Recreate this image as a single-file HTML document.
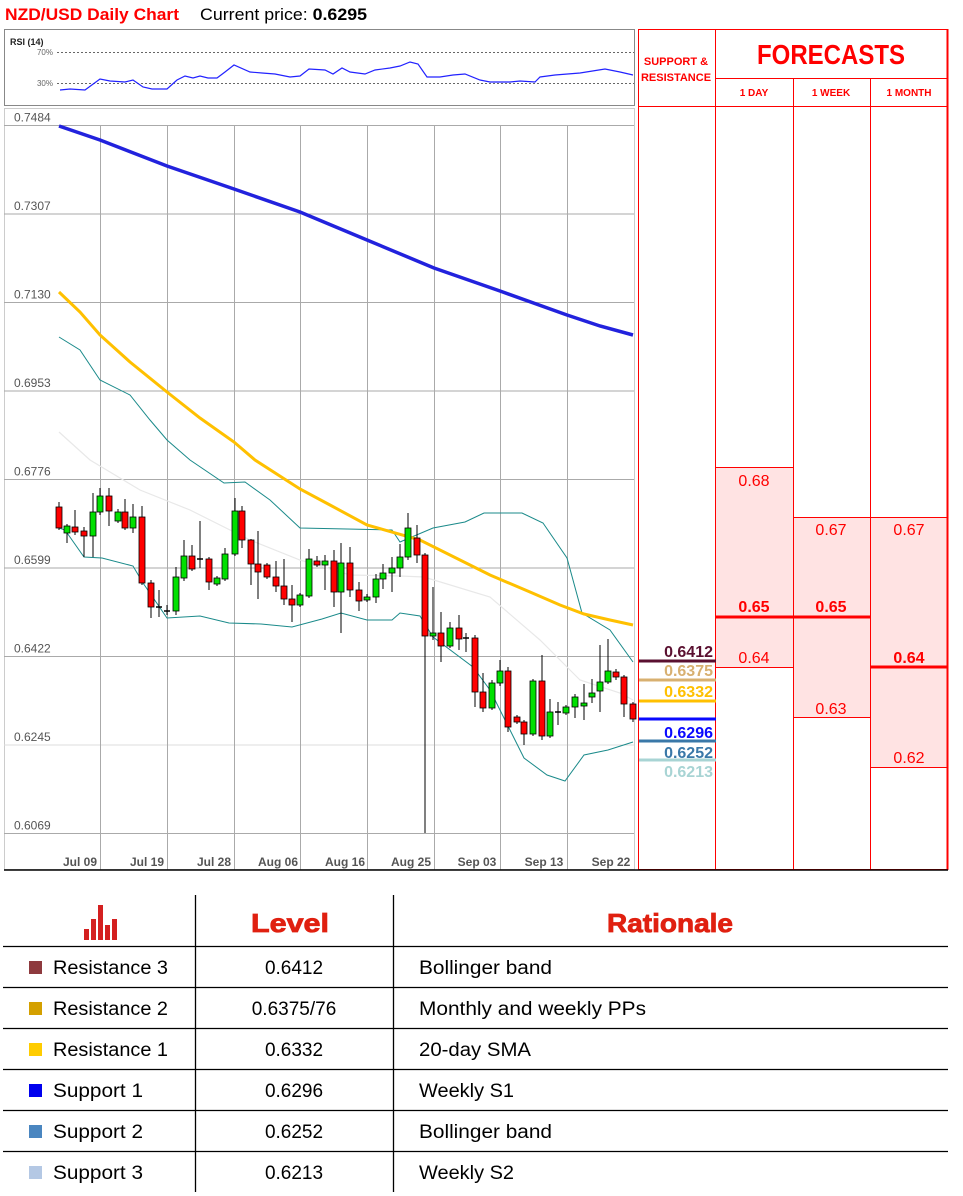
<!DOCTYPE html>
<html><head><meta charset="utf-8"><style>
html,body{margin:0;padding:0;background:#fff;width:963px;height:1196px;overflow:hidden}
svg{display:block}
text{font-family:"Liberation Sans",sans-serif}
</style></head><body>
<svg id="s" width="963" height="1196" viewBox="0 0 963 1196" xmlns="http://www.w3.org/2000/svg">
<!-- title -->
<text x="5" y="20" font-size="17" font-weight="bold" fill="#f00" textLength="174" lengthAdjust="spacingAndGlyphs">NZD/USD Daily Chart</text>
<text x="200" y="20" font-size="17" fill="#000" textLength="167" lengthAdjust="spacingAndGlyphs">Current price: <tspan font-weight="bold">0.6295</tspan></text>
<!-- RSI -->
<rect x="4.5" y="29.5" width="630" height="76" fill="#fff" stroke="#888"/>
<text x="10" y="45" font-size="9" font-weight="bold" fill="#222">RSI (14)</text>
<text x="53" y="55" font-size="8" fill="#666" text-anchor="end">70%</text>
<text x="53" y="86" font-size="8" fill="#666" text-anchor="end">30%</text>
<line x1="57" y1="52.5" x2="634" y2="52.5" stroke="#666" stroke-dasharray="2,2"/>
<line x1="57" y1="83.5" x2="634" y2="83.5" stroke="#666" stroke-dasharray="2,2"/>
<polyline fill="none" stroke="#22f" stroke-width="1.2" points="60,90 70,89 85,90 100,79 110,81 125,82 133,80 143,87 152,89 167,89 177,80 185,76 193,78 200,76 208,78 217,78 225,72 234,65 250,72 262,73 275,74 290,77 300,76 309,69 325,70 333,74 342,68 350,72 365,74 375,70 390,68 400,66 410,62 418,64 427,77 440,77 453,75 465,74 480,80 490,82 510,82 520,81 535,82 540,77 555,75 580,73 605,69 620,72 633,75"/>
<!-- main chart frame -->
<rect x="4.5" y="108.5" width="630" height="761" fill="#fff" stroke="#ccc"/>
<g id="grid" stroke="#aaa" stroke-width="1"></g>
<g font-size="12" fill="#555" id="ylab"></g>
<g font-size="12" fill="#555" font-weight="bold" text-anchor="middle">
<text x="80" y="866">Jul 09</text><text x="147" y="866">Jul 19</text><text x="214" y="866">Jul 28</text><text x="278" y="866">Aug 06</text><text x="345" y="866">Aug 16</text><text x="411" y="866">Aug 25</text><text x="477" y="866">Sep 03</text><text x="544" y="866">Sep 13</text><text x="611" y="866">Sep 22</text>
</g>
<!-- indicator lines -->
<polyline fill="none" stroke="#e8e8e8" stroke-width="1.2" points="59,432 90,460 140,490 190,510 250,540 300,560 350,575 400,576 424,577 490,597 540,640 580,680 620,693 633,700"/>
<polyline fill="none" stroke="#1a8a8a" stroke-width="1" points="59,337 80,350 100,380 130,395 150,420 167,440 190,460 224,483 245,482 270,500 300,528 392,530 400,542 433,528 465,522 484,513 522,513 543,523 567,558 582,613 610,630 633,662"/>
<polyline fill="none" stroke="#1a8a8a" stroke-width="1" points="59,528 65,530 84,557 102,558 133,566 143,583 167,618 200,616 229,623 261,624 292,627 322,619 341,613 367,620 392,620 400,613 420,616 433,637 473,667 490,690 524,758 547,775 565,781 584,755 608,750 633,742"/>
<polyline fill="none" stroke="#ffc000" stroke-width="3" points="59,292 80,312 100,335 130,362 167,392 200,418 234,442 255,460 300,489 330,505 367,525 420,540 460,560 490,575 530,592 560,605 584,614 610,620 633,625"/>
<polyline fill="none" stroke="#2222dd" stroke-width="3.5" points="59,126 100,140 167,166 234,189 300,212 367,240 434,268 500,291 567,315 600,326 633,335"/>
<g id="candles"></g>
<!-- forecast panel -->
<rect x="715" y="467" width="78" height="200" fill="#ffe3e3"/>
<rect x="793" y="517" width="77" height="200" fill="#ffe3e3"/>
<rect x="870" y="517" width="78" height="250" fill="#ffe3e3"/>
<g stroke="#f00" stroke-width="1" fill="none">
<rect x="638.5" y="29.5" width="309" height="840"/>
<line x1="715.5" y1="29" x2="715.5" y2="870"/>
<line x1="793.5" y1="78" x2="793.5" y2="870"/>
<line x1="870.5" y1="78" x2="870.5" y2="870"/>
<line x1="715" y1="78.5" x2="948" y2="78.5"/>
<line x1="638" y1="106.5" x2="948" y2="106.5"/>
<line x1="715" y1="467.5" x2="793" y2="467.5"/>
<line x1="715" y1="667.5" x2="793" y2="667.5"/>
<line x1="793" y1="517.5" x2="948" y2="517.5"/>
<line x1="793" y1="717.5" x2="870" y2="717.5"/>
<line x1="870" y1="767.5" x2="948" y2="767.5"/>
</g>
<line x1="947.5" y1="29" x2="947.5" y2="870" stroke="#f00" stroke-width="2"/>
<line x1="715" y1="617" x2="870" y2="617" stroke="#f00" stroke-width="3"/>
<line x1="870" y1="667" x2="948" y2="667" stroke="#f00" stroke-width="3"/>
<line x1="4" y1="870" x2="948" y2="870" stroke="#000" stroke-width="1.5"/>
<g fill="#f00" text-anchor="middle" font-weight="bold">
<text x="676" y="65" font-size="11">SUPPORT &amp;</text>
<text x="676" y="81" font-size="11">RESISTANCE</text>
<text x="831" y="64" font-size="28" textLength="148" lengthAdjust="spacingAndGlyphs">FORECASTS</text>
<text x="754" y="96" font-size="10">1 DAY</text>
<text x="831" y="96" font-size="10">1 WEEK</text>
<text x="909" y="96" font-size="10">1 MONTH</text>
</g>
<g fill="#f00" text-anchor="middle" font-size="16">
<text x="754" y="486">0.68</text>
<text x="754" y="612" font-weight="bold">0.65</text>
<text x="754" y="663">0.64</text>
<text x="831" y="535">0.67</text>
<text x="831" y="612" font-weight="bold">0.65</text>
<text x="831" y="714">0.63</text>
<text x="909" y="535">0.67</text>
<text x="909" y="663" font-weight="bold">0.64</text>
<text x="909" y="763">0.62</text>
</g>
<!-- S&R lines -->
<g stroke-width="3">
<line x1="639" y1="661" x2="716" y2="661" stroke="#5a1030"/>
<line x1="639" y1="680" x2="716" y2="680" stroke="#d8b070"/>
<line x1="639" y1="701" x2="716" y2="701" stroke="#ffc000"/>
<line x1="639" y1="719" x2="716" y2="719" stroke="#0a0aff"/>
<line x1="639" y1="741" x2="716" y2="741" stroke="#3a78a8"/>
<line x1="639" y1="760" x2="716" y2="760" stroke="#a8d4d4"/>
</g>
<g font-size="16" font-weight="bold" text-anchor="end">
<text x="713" y="657" fill="#5a1030">0.6412</text>
<text x="713" y="676" fill="#d8b070">0.6375</text>
<text x="713" y="697" fill="#ffc000">0.6332</text>
<text x="713" y="738" fill="#0a0aff">0.6296</text>
<text x="713" y="758" fill="#3a78a8">0.6252</text>
<text x="713" y="777" fill="#a8d4d4">0.6213</text>
</g>
<!-- table -->
<g stroke="#000" stroke-width="1.3">
<line x1="195.5" y1="895" x2="195.5" y2="1192"/>
<line x1="393.5" y1="895" x2="393.5" y2="1192"/>
<line x1="3" y1="946.5" x2="948" y2="946.5"/>
<line x1="3" y1="987.5" x2="948" y2="987.5"/>
<line x1="3" y1="1028.5" x2="948" y2="1028.5"/>
<line x1="3" y1="1069.5" x2="948" y2="1069.5"/>
<line x1="3" y1="1110.5" x2="948" y2="1110.5"/>
<line x1="3" y1="1151.5" x2="948" y2="1151.5"/>
</g>
<g fill="#d42020">
<rect x="84" y="929" width="5" height="11"/><rect x="91" y="919" width="5" height="21"/><rect x="98" y="905" width="5" height="35"/><rect x="105" y="925" width="5" height="15"/><rect x="112" y="919" width="5" height="21"/>
</g>
<g fill="#e02010" font-weight="900" font-size="26" text-anchor="middle" stroke="#e02010" stroke-width="0.8">
<text x="290" y="932" textLength="78" lengthAdjust="spacingAndGlyphs">Level</text>
<text x="670" y="932" textLength="126" lengthAdjust="spacingAndGlyphs">Rationale</text>
</g>
<rect x="29" y="961" width="13" height="13" fill="#8e3a3e"/>
<rect x="29" y="1002" width="13" height="13" fill="#d4a000"/>
<rect x="29" y="1043" width="13" height="13" fill="#ffcc00"/>
<rect x="29" y="1084" width="13" height="13" fill="#0000ee"/>
<rect x="29" y="1125" width="13" height="13" fill="#4a86c0"/>
<rect x="29" y="1166" width="13" height="13" fill="#b4c8e4"/>
<g font-size="19" fill="#000">
<text x="53" y="974" textLength="115" lengthAdjust="spacingAndGlyphs">Resistance 3</text>
<text x="53" y="1015" textLength="115" lengthAdjust="spacingAndGlyphs">Resistance 2</text>
<text x="53" y="1056" textLength="115" lengthAdjust="spacingAndGlyphs">Resistance 1</text>
<text x="53" y="1097" textLength="90" lengthAdjust="spacingAndGlyphs">Support 1</text>
<text x="53" y="1138" textLength="90" lengthAdjust="spacingAndGlyphs">Support 2</text>
<text x="53" y="1179" textLength="90" lengthAdjust="spacingAndGlyphs">Support 3</text>
</g>
<g font-size="19" fill="#000" text-anchor="middle">
<text x="294" y="974">0.6412</text>
<text x="294" y="1015">0.6375/76</text>
<text x="294" y="1056">0.6332</text>
<text x="294" y="1097">0.6296</text>
<text x="294" y="1138">0.6252</text>
<text x="294" y="1179">0.6213</text>
</g>
<g font-size="19" fill="#000">
<text x="419" y="974" textLength="133" lengthAdjust="spacingAndGlyphs">Bollinger band</text>
<text x="419" y="1015" textLength="227" lengthAdjust="spacingAndGlyphs">Monthly and weekly PPs</text>
<text x="419" y="1056" textLength="112" lengthAdjust="spacingAndGlyphs">20-day SMA</text>
<text x="419" y="1097" textLength="95" lengthAdjust="spacingAndGlyphs">Weekly S1</text>
<text x="419" y="1138" textLength="133" lengthAdjust="spacingAndGlyphs">Bollinger band</text>
<text x="419" y="1179" textLength="95" lengthAdjust="spacingAndGlyphs">Weekly S2</text>
</g>
</svg>
<script>
var NS="http://www.w3.org/2000/svg";
function el(p,t,a){var e=document.createElementNS(NS,t);for(var k in a)e.setAttribute(k,a[k]);p.appendChild(e);return e;}
var g=document.getElementById("grid"),yl=document.getElementById("ylab");
var labs=["0.7484","0.7307","0.7130","0.6953","0.6776","0.6599","0.6422","0.6245","0.6069"];
for(var i=0;i<9;i++){var y=125.5+i*88.5;el(g,"line",{x1:4,y1:y,x2:634,y2:y,stroke:(i==7?"#ddd":"#aaa")});var t=el(yl,"text",{x:14,y:y-4});t.textContent=labs[i];}
[100,167,234,300,367,434,500,567].forEach(function(x){el(g,"line",{x1:x+.5,y1:125,x2:x+.5,y2:870,stroke:"#aaa"});});
var C=[[59,'r',507,528,502,530],[67,'g',526,533,524,543],[75,'r',527,532,510,535],[84,'r',531,536,527,557],[93,'g',512,536,493,557],[100,'g',496,512,488,515],[109,'r',496,511,488,526],[118,'g',512,521,509,523],[125,'r',512,528,499,530],[133,'g',517,528,504,533],[142,'r',517,583,506,585],[151,'r',583,607,580,618],[159,'d',607,607,590,617],[167,'d',611,611,605,615],[176,'g',577,611,567,615],[184,'g',556,578,540,581],[192,'r',556,569,545,571],[200,'d',559,559,521,568],[209,'r',559,582,557,590],[217,'g',578,584,576,586],[225,'g',554,579,548,581],[235,'g',511,554,498,556],[242,'r',511,540,506,548],[251,'r',540,564,539,585],[258,'r',564,572,531,599],[267,'r',565,577,563,579],[276,'r',577,586,561,592],[284,'r',586,599,559,605],[292,'r',599,605,585,622],[300,'g',595,605,593,607],[309,'g',559,596,549,598],[317,'r',561,565,556,567],[325,'g',561,565,555,590],[334,'r',561,592,550,607],[341,'g',563,592,543,633],[350,'r',563,590,547,597],[359,'r',590,601,582,611],[367,'g',597,600,594,602],[376,'g',579,597,574,603],[383,'g',573,579,564,589],[392,'g',568,573,557,592],[400,'g',557,568,544,577],[408,'g',528,557,513,560],[417,'r',538,555,525,563],[425,'r',555,636,553,833],[433,'g',633,636,587,640],[441,'r',633,646,612,662],[450,'g',628,646,622,648],[459,'r',628,639,615,650],[466,'d',638,638,633,652],[475,'r',638,692,635,707],[483,'r',692,708,673,712],[492,'g',683,708,680,710],[500,'g',671,683,660,686],[508,'r',671,727,667,732],[517,'r',717,722,715,724],[524,'r',722,734,720,745],[533,'g',681,734,679,736],[542,'r',681,736,655,740],[550,'g',712,736,699,738],[558,'d',712,712,702,725],[566,'g',707,713,705,715],[575,'g',697,707,694,718],[584,'g',703,706,684,720],[592,'g',693,697,679,703],[600,'g',682,691,645,712],[608,'g',671,682,639,684],[616,'r',672,677,669,680],[624,'r',677,704,675,717],[633,'r',704,719,702,722]];
var cg=document.getElementById("candles");
C.forEach(function(c){var x=c[0];el(cg,"line",{x1:x,y1:c[4],x2:x,y2:c[5],stroke:"#000","stroke-width":1});
if(c[1]=='d'){el(cg,"line",{x1:x-3,y1:c[2],x2:x+3,y2:c[2],stroke:"#000","stroke-width":1.5});}
else el(cg,"rect",{x:x-3,y:c[2],width:6,height:Math.max(2,c[3]-c[2]),fill:(c[1]=='g'?"#00e000":"#f00"),stroke:"#000","stroke-width":0.8});});
</script>
</body></html>
